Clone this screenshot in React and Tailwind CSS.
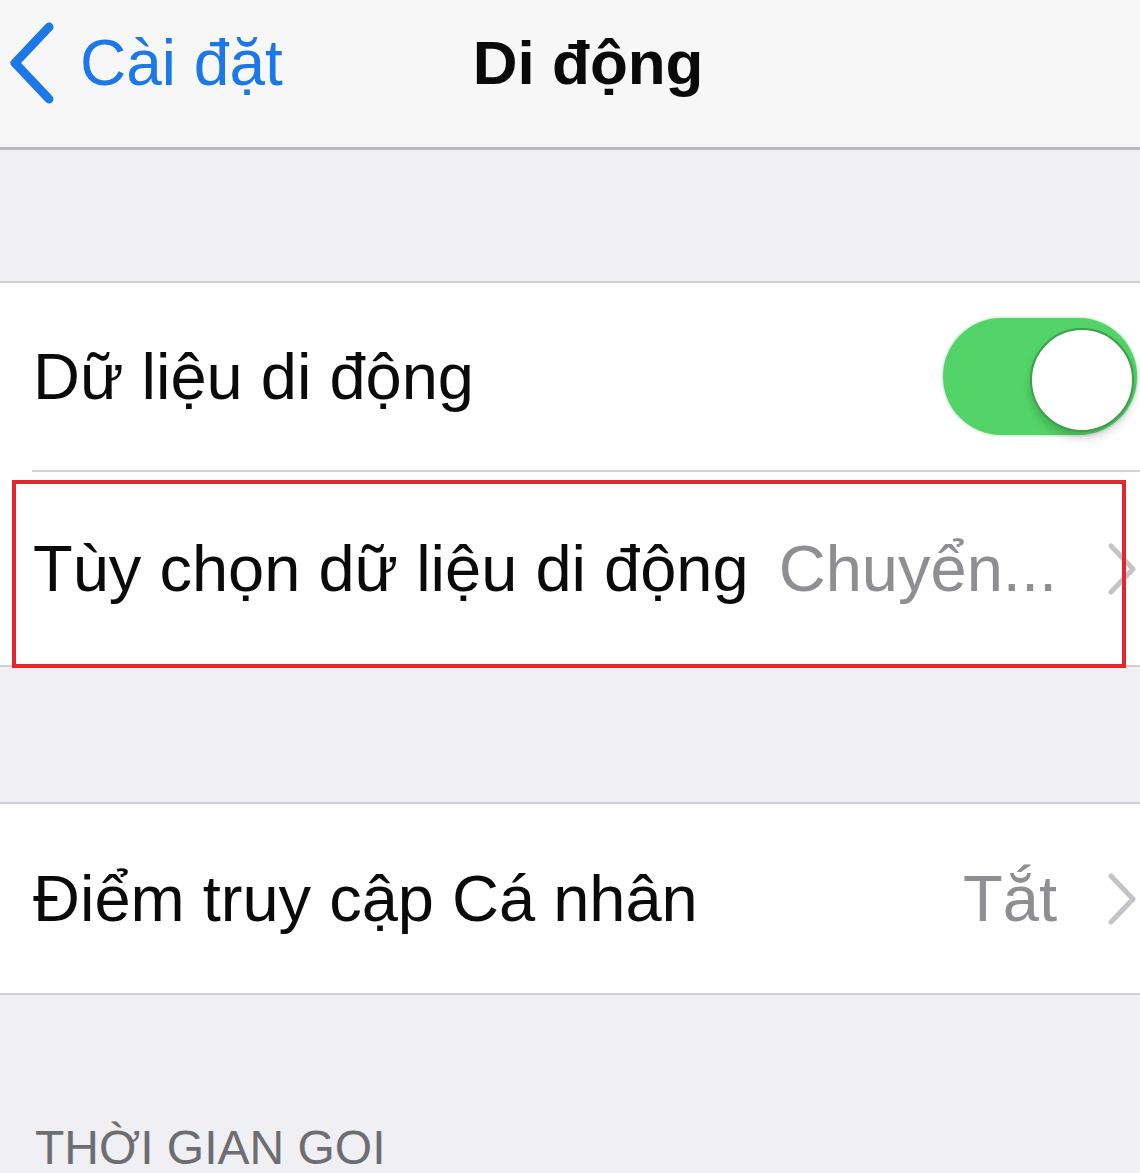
import { ChevronRight } from 'lucide-react';

const font = { fontFamily: '"Liberation Sans", Arial, sans-serif' };

function Toggle() {
  return (
    <div className="flex items-end justify-end w-[194px] h-[117px] rounded-full bg-[#53d468] pr-[3px] pb-[3px] shadow-[0_0_3px_rgba(60,170,80,0.6)]">
      <div className="size-[104px] rounded-full bg-white border-2 border-[#3c9f4c] shadow-[0_6px_10px_rgba(0,0,0,0.18)]" />
    </div>
  );
}

function Chevron() {
  return (
    <svg width="30" height="52" viewBox="0 0 30 52" className="shrink-0">
      <path d="M4 3 L26 26 L4 49" fill="none" stroke="#c4c4c8" strokeWidth="5" strokeLinecap="round" strokeLinejoin="round" />
    </svg>
  );
}

export default function App() {
  return (
    <div className="w-[1140px] h-[1173px] overflow-hidden bg-[#efeff4] text-[#0a0a0a]" style={font}>
      {/* Navigation bar */}
      <header className="h-[150px] bg-[#f7f7f8] border-b-[3px] border-[#b9b9bd] flex items-center pb-[22px]">
        <div className="flex items-center text-[#1b78e6] pl-[8px]">
          <svg width="48" height="82" viewBox="0 0 48 82">
            <path d="M41 5 L7 41 L41 77" fill="none" stroke="#1b78e6" strokeWidth="9" strokeLinecap="round" strokeLinejoin="round" />
          </svg>
          <span className="ml-[24px] text-[64px] leading-none">Cài đặt</span>
        </div>
        <h1 className="ml-[190px] text-[62px] font-bold leading-none">Di động</h1>
      </header>

      <div className="h-[131px]" />

      {/* Mobile data group */}
      <section className="relative bg-white border-y-2 border-[#cfcfd4]">
        <div className="flex items-center justify-between h-[187px] pl-[33px] pr-[3px]">
          <span className="text-[65px] leading-none">Dữ liệu di động</span>
          <Toggle />
        </div>
        <div className="ml-[32px] h-[2px] bg-[#d3d3d8]" />
        <div className="flex items-center h-[193px] pl-[33px] pr-[3px]">
          <span className="text-[65px] leading-none">Tùy chọn dữ liệu di động</span>
          <span className="ml-auto text-[65px] leading-none text-[#8e8e93]">Chuyển...</span>
          <div className="ml-[50px]">
            <Chevron />
          </div>
        </div>
        {/* highlight frame */}
        <div className="absolute left-[12px] top-[197px] w-[1114px] h-[188px] border-4 border-[#e3262b]" />
      </section>

      <div className="h-[135px]" />

      {/* Personal hotspot */}
      <section className="bg-white border-y-2 border-[#cfcfd4]">
        <div className="flex items-center h-[189px] pl-[33px] pr-[3px]">
          <span className="text-[65px] leading-none">Điểm truy cập Cá nhân</span>
          <span className="ml-auto text-[65px] leading-none text-[#8e8e93]">Tắt</span>
          <div className="ml-[50px]">
            <Chevron />
          </div>
        </div>
      </section>

      <div className="pt-[129px] pl-[35px] text-[48px] leading-none text-[#6d6d72]">THỜI GIAN GOI</div>
    </div>
  );
}
